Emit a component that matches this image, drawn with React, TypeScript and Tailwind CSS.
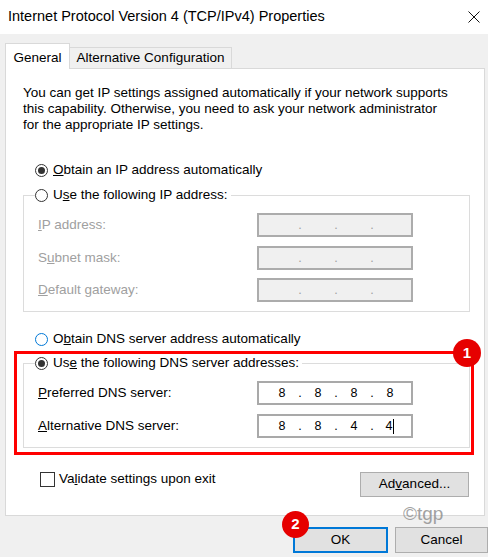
import React from 'react'

const font = { fontFamily: '"Liberation Sans", Arial, sans-serif' }

function Radio({ checked, focus }: { checked?: boolean; focus?: boolean }) {
  return (
    <span
      className={`flex h-[13px] w-[13px] shrink-0 items-center justify-center rounded-full border bg-white ${
        focus ? 'border-[#0078d7]' : 'border-[#333333]'
      }`}
    >
      {checked && <span className="h-[7px] w-[7px] rounded-full bg-[#333333]" />}
    </span>
  )
}

function IpBox({ values, disabled, cursor }: { values?: string[]; disabled?: boolean; cursor?: boolean }) {
  const parts = values ?? ['', '', '', '']
  return (
    <div
      className={`flex h-[24px] w-[156px] items-center border-2 pl-[8px] text-[12.5px] ${
        disabled ? 'border-[#acacac] bg-[#f0f0f0] text-[#a0a0a0]' : 'border-[#a9a9a9] bg-white text-black'
      }`}
    >
      {parts.map((p, i) => (
        <React.Fragment key={i}>
          <span className="flex w-[30px] items-center justify-center">
            {p}
            {cursor && i === 3 && <span className="ml-[1px] h-[15px] w-px bg-black" />}
          </span>
          {i < 3 && <span className="w-[6px] text-center">.</span>}
        </React.Fragment>
      ))}
    </div>
  )
}

function Row({ label, children, disabled }: { label: React.ReactNode; children: React.ReactNode; disabled?: boolean }) {
  return (
    <div className="flex h-[24px] items-center">
      <span className={`w-[219px] ${disabled ? 'text-[#a0a0a0]' : 'text-black'}`}>{label}</span>
      {children}
    </div>
  )
}

export default function App() {
  return (
    <div className="relative h-[557px] w-[488px] overflow-hidden bg-[#f0f0f0] text-[13.5px] text-black" style={font}>
      {/* Title bar */}
      <div className="flex h-[34px] items-center justify-between bg-white pl-[8px] pr-[8px]">
        <span className="text-[14.5px]">Internet Protocol Version 4 (TCP/IPv4) Properties</span>
        <svg width="12" height="12" viewBox="0 0 12 12">
          <path d="M0.5 0.5 L11.5 11.5 M11.5 0.5 L0.5 11.5" stroke="#111" strokeWidth="1" />
        </svg>
      </div>

      {/* Tabs */}
      <div className="flex h-[34px] items-end pl-[5px]">
        <div className="relative z-10 -mb-px flex h-[26px] w-[65px] items-start justify-center border-l border-r border-t border-[#d9d9d9] bg-white pt-[4px]">
          General
        </div>
        <div className="flex h-[21px] w-[162px] items-center justify-center border-r border-t border-[#d9d9d9] bg-[#f0f0f0]">
          Alternative Configuration
        </div>
      </div>

      {/* Panel */}
      <div className="ml-[5px] h-[448px] w-[480px] border border-[#d9d9d9] bg-white">
        <p className="ml-[17px] mt-[16px] whitespace-nowrap leading-[16px]">
          You can get IP settings assigned automatically if your network supports
          <br />
          this capability. Otherwise, you need to ask your network administrator
          <br />
          for the appropriate IP settings.
        </p>

        <div className="ml-[29px] mt-[29px] flex h-[16px] items-center gap-[5px]">
          <Radio checked />
          <span>
            <u>O</u>btain an IP address automatically
          </span>
        </div>

        <fieldset className="ml-[17px] mt-[9px] w-[447px] border border-[#dcdcdc] pb-[9px] pl-[14px]">
          <legend className="-ml-[3px] flex h-[16px] items-center gap-[5px] pr-[3px]">
            <Radio />
            <span>
              U<u>s</u>e the following IP address:
            </span>
          </legend>
          <div className="mt-[10px]">
            <Row disabled label={<><u>I</u>P address:</>}>
              <IpBox disabled />
            </Row>
          </div>
          <div className="mt-[9px]">
            <Row disabled label={<>S<u>u</u>bnet mask:</>}>
              <IpBox disabled />
            </Row>
          </div>
          <div className="mt-[8px]">
            <Row disabled label={<><u>D</u>efault gateway:</>}>
              <IpBox disabled />
            </Row>
          </div>
        </fieldset>

        <div className="ml-[29px] mt-[19px] flex h-[16px] items-center gap-[5px]">
          <Radio focus />
          <span>
            O<u>b</u>tain DNS server address automatically
          </span>
        </div>

        <fieldset className="ml-[17px] mt-[8px] w-[447px] border border-[#dcdcdc] pb-[9px] pl-[14px]">
          <legend className="-ml-[3px] flex h-[16px] items-center gap-[5px] pr-[3px]">
            <Radio checked />
            <span>
              Us<u>e</u> the following DNS server addresses:
            </span>
          </legend>
          <div className="mt-[10px]">
            <Row label={<><u>P</u>referred DNS server:</>}>
              <IpBox values={['8', '8', '8', '8']} />
            </Row>
          </div>
          <div className="mt-[9px]">
            <Row label={<><u>A</u>lternative DNS server:</>}>
              <IpBox values={['8', '8', '4', '4']} cursor />
            </Row>
          </div>
        </fieldset>

        <div className="mt-[23px] flex items-start pl-[34px] pr-[15px]">
          <div className="flex h-[16px] items-center gap-[4px]">
            <span className="h-[15px] w-[15px] border border-[#333333] bg-white" />
            <span>
              Va<u>l</u>idate settings upon exit
            </span>
          </div>
          <button className="ml-auto mt-px flex h-[25px] w-[109px] items-center justify-center border border-[#adadad] bg-[#e1e1e1]">
            Ad<u>v</u>anced...
          </button>
        </div>
      </div>

      {/* Dialog buttons */}
      <div className="mt-[11px] flex justify-end gap-[7px]">
        <button className="flex h-[26px] w-[95px] items-center justify-center border-2 border-[#0078d7] bg-[#e1e1e1]">
          OK
        </button>
        <button className="flex h-[26px] w-[93px] items-center justify-center border border-[#adadad] bg-[#e1e1e1]">
          Cancel
        </button>
      </div>

      {/* Watermark */}
      <span className="absolute left-[403px] top-[500px] text-[19px] text-[#8c8c8c] opacity-80">
        ©tgp
      </span>

      {/* Annotations */}
      <div className="absolute left-[14px] top-[351px] h-[104px] w-[460px] border-[3px] border-[#ff0000]" />
      <div className="absolute left-[453px] top-[339px] flex h-[28px] w-[28px] items-center justify-center rounded-full bg-[#e60000] text-[15px] font-bold text-white">
        1
      </div>
      <div className="absolute left-[282px] top-[511px] flex h-[27px] w-[27px] items-center justify-center rounded-full bg-[#e60000] text-[15px] font-bold text-white">
        2
      </div>
    </div>
  )
}
